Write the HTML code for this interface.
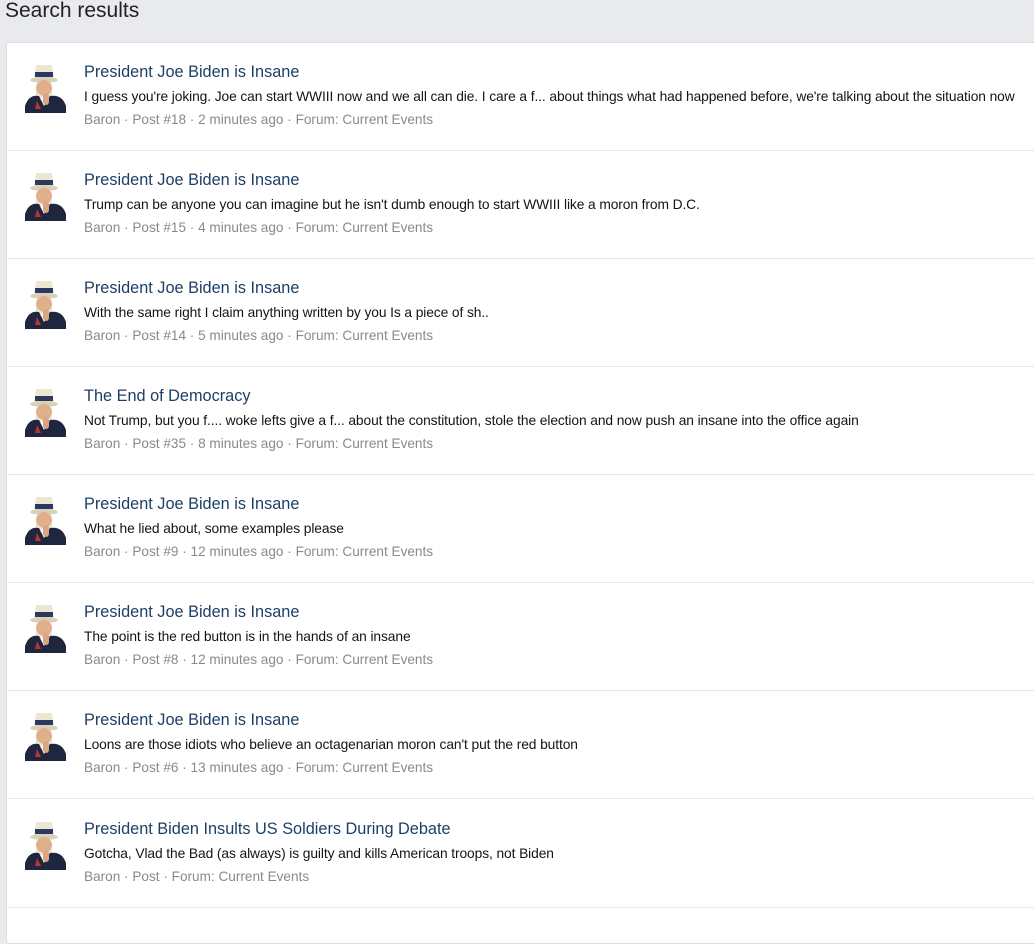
<!DOCTYPE html>
<html><head><meta charset="utf-8"><style>
body{margin:0;background:#e9eaed;font-family:"Liberation Sans",sans-serif;width:1034px;height:861px;overflow:hidden;position:relative}
h1{position:absolute;left:5px;top:-4px;margin:0;font-weight:normal;font-size:21px;color:#222;line-height:30px}
.card{position:absolute;left:6px;top:42px;width:1040px;height:900px;background:#fff;border:1px solid #dcdde0;border-radius:3px}
.row{position:absolute;left:0;width:1040px;height:107px;border-bottom:1px solid #e6e7ea}
.av{position:absolute;left:16px;top:20px;width:46px;height:50px}
.t{position:absolute;left:77px;top:20px;font-size:16.3px;color:#1c3f66;white-space:nowrap}
.x{position:absolute;left:77px;top:46px;font-size:13.8px;color:#141414;white-space:nowrap;letter-spacing:-0.1px}
.m{position:absolute;left:77px;top:69px;font-size:13.6px;color:#8a8a8a;white-space:nowrap}
</style></head><body>
<h1>Search results</h1>
<div class="card">
<div class="row" style="top:0"><svg class="av" viewBox="0 0 46 50"><path d="M13 2h16l2 14H11z" fill="#ece6d2"/><rect x="12" y="9" width="18" height="5" fill="#2c3860"/><ellipse cx="21" cy="17" rx="14" ry="3" fill="#d8d0b8"/><ellipse cx="21" cy="25" rx="8" ry="8" fill="#e0b08a"/><path d="M13 27q8 14 16 0v8H13z" fill="#e8e2d8"/><path d="M2 43q4-12 14-10l5 10 6-10q12-2 16 10v7H2z" fill="#1f2640"/><rect x="20" y="30" width="6" height="12" rx="3" fill="#d9a582"/><path d="M14 38l4 8h-6z" fill="#b33"/></svg><div class="t">President Joe Biden is Insane</div><div class="x">I guess you're joking. Joe can start WWIII now and we all can die. I care a f... about things what had happened before, we're talking about the situation now</div><div class="m">Baron · Post #18 · 2 minutes ago · Forum: Current Events</div></div>
<div class="row" style="top:108px"><svg class="av" viewBox="0 0 46 50"><path d="M13 2h16l2 14H11z" fill="#ece6d2"/><rect x="12" y="9" width="18" height="5" fill="#2c3860"/><ellipse cx="21" cy="17" rx="14" ry="3" fill="#d8d0b8"/><ellipse cx="21" cy="25" rx="8" ry="8" fill="#e0b08a"/><path d="M13 27q8 14 16 0v8H13z" fill="#e8e2d8"/><path d="M2 43q4-12 14-10l5 10 6-10q12-2 16 10v7H2z" fill="#1f2640"/><rect x="20" y="30" width="6" height="12" rx="3" fill="#d9a582"/><path d="M14 38l4 8h-6z" fill="#b33"/></svg><div class="t">President Joe Biden is Insane</div><div class="x">Trump can be anyone you can imagine but he isn't dumb enough to start WWIII like a moron from D.C.</div><div class="m">Baron · Post #15 · 4 minutes ago · Forum: Current Events</div></div>
<div class="row" style="top:216px"><svg class="av" viewBox="0 0 46 50"><path d="M13 2h16l2 14H11z" fill="#ece6d2"/><rect x="12" y="9" width="18" height="5" fill="#2c3860"/><ellipse cx="21" cy="17" rx="14" ry="3" fill="#d8d0b8"/><ellipse cx="21" cy="25" rx="8" ry="8" fill="#e0b08a"/><path d="M13 27q8 14 16 0v8H13z" fill="#e8e2d8"/><path d="M2 43q4-12 14-10l5 10 6-10q12-2 16 10v7H2z" fill="#1f2640"/><rect x="20" y="30" width="6" height="12" rx="3" fill="#d9a582"/><path d="M14 38l4 8h-6z" fill="#b33"/></svg><div class="t">President Joe Biden is Insane</div><div class="x">With the same right I claim anything written by you Is a piece of sh..</div><div class="m">Baron · Post #14 · 5 minutes ago · Forum: Current Events</div></div>
<div class="row" style="top:324px"><svg class="av" viewBox="0 0 46 50"><path d="M13 2h16l2 14H11z" fill="#ece6d2"/><rect x="12" y="9" width="18" height="5" fill="#2c3860"/><ellipse cx="21" cy="17" rx="14" ry="3" fill="#d8d0b8"/><ellipse cx="21" cy="25" rx="8" ry="8" fill="#e0b08a"/><path d="M13 27q8 14 16 0v8H13z" fill="#e8e2d8"/><path d="M2 43q4-12 14-10l5 10 6-10q12-2 16 10v7H2z" fill="#1f2640"/><rect x="20" y="30" width="6" height="12" rx="3" fill="#d9a582"/><path d="M14 38l4 8h-6z" fill="#b33"/></svg><div class="t">The End of Democracy</div><div class="x">Not Trump, but you f.... woke lefts give a f... about the constitution, stole the election and now push an insane into the office again</div><div class="m">Baron · Post #35 · 8 minutes ago · Forum: Current Events</div></div>
<div class="row" style="top:432px"><svg class="av" viewBox="0 0 46 50"><path d="M13 2h16l2 14H11z" fill="#ece6d2"/><rect x="12" y="9" width="18" height="5" fill="#2c3860"/><ellipse cx="21" cy="17" rx="14" ry="3" fill="#d8d0b8"/><ellipse cx="21" cy="25" rx="8" ry="8" fill="#e0b08a"/><path d="M13 27q8 14 16 0v8H13z" fill="#e8e2d8"/><path d="M2 43q4-12 14-10l5 10 6-10q12-2 16 10v7H2z" fill="#1f2640"/><rect x="20" y="30" width="6" height="12" rx="3" fill="#d9a582"/><path d="M14 38l4 8h-6z" fill="#b33"/></svg><div class="t">President Joe Biden is Insane</div><div class="x">What he lied about, some examples please</div><div class="m">Baron · Post #9 · 12 minutes ago · Forum: Current Events</div></div>
<div class="row" style="top:540px"><svg class="av" viewBox="0 0 46 50"><path d="M13 2h16l2 14H11z" fill="#ece6d2"/><rect x="12" y="9" width="18" height="5" fill="#2c3860"/><ellipse cx="21" cy="17" rx="14" ry="3" fill="#d8d0b8"/><ellipse cx="21" cy="25" rx="8" ry="8" fill="#e0b08a"/><path d="M13 27q8 14 16 0v8H13z" fill="#e8e2d8"/><path d="M2 43q4-12 14-10l5 10 6-10q12-2 16 10v7H2z" fill="#1f2640"/><rect x="20" y="30" width="6" height="12" rx="3" fill="#d9a582"/><path d="M14 38l4 8h-6z" fill="#b33"/></svg><div class="t">President Joe Biden is Insane</div><div class="x">The point is the red button is in the hands of an insane</div><div class="m">Baron · Post #8 · 12 minutes ago · Forum: Current Events</div></div>
<div class="row" style="top:648px"><svg class="av" viewBox="0 0 46 50"><path d="M13 2h16l2 14H11z" fill="#ece6d2"/><rect x="12" y="9" width="18" height="5" fill="#2c3860"/><ellipse cx="21" cy="17" rx="14" ry="3" fill="#d8d0b8"/><ellipse cx="21" cy="25" rx="8" ry="8" fill="#e0b08a"/><path d="M13 27q8 14 16 0v8H13z" fill="#e8e2d8"/><path d="M2 43q4-12 14-10l5 10 6-10q12-2 16 10v7H2z" fill="#1f2640"/><rect x="20" y="30" width="6" height="12" rx="3" fill="#d9a582"/><path d="M14 38l4 8h-6z" fill="#b33"/></svg><div class="t">President Joe Biden is Insane</div><div class="x">Loons are those idiots who believe an octagenarian moron can't put the red button</div><div class="m">Baron · Post #6 · 13 minutes ago · Forum: Current Events</div></div>
<div class="row" style="top:757px"><svg class="av" viewBox="0 0 46 50"><path d="M13 2h16l2 14H11z" fill="#ece6d2"/><rect x="12" y="9" width="18" height="5" fill="#2c3860"/><ellipse cx="21" cy="17" rx="14" ry="3" fill="#d8d0b8"/><ellipse cx="21" cy="25" rx="8" ry="8" fill="#e0b08a"/><path d="M13 27q8 14 16 0v8H13z" fill="#e8e2d8"/><path d="M2 43q4-12 14-10l5 10 6-10q12-2 16 10v7H2z" fill="#1f2640"/><rect x="20" y="30" width="6" height="12" rx="3" fill="#d9a582"/><path d="M14 38l4 8h-6z" fill="#b33"/></svg><div class="t">President Biden Insults US Soldiers During Debate</div><div class="x">Gotcha, Vlad the Bad (as always) is guilty and kills American troops, not Biden</div><div class="m">Baron · Post · Forum: Current Events</div></div>
</div>
</body></html>
